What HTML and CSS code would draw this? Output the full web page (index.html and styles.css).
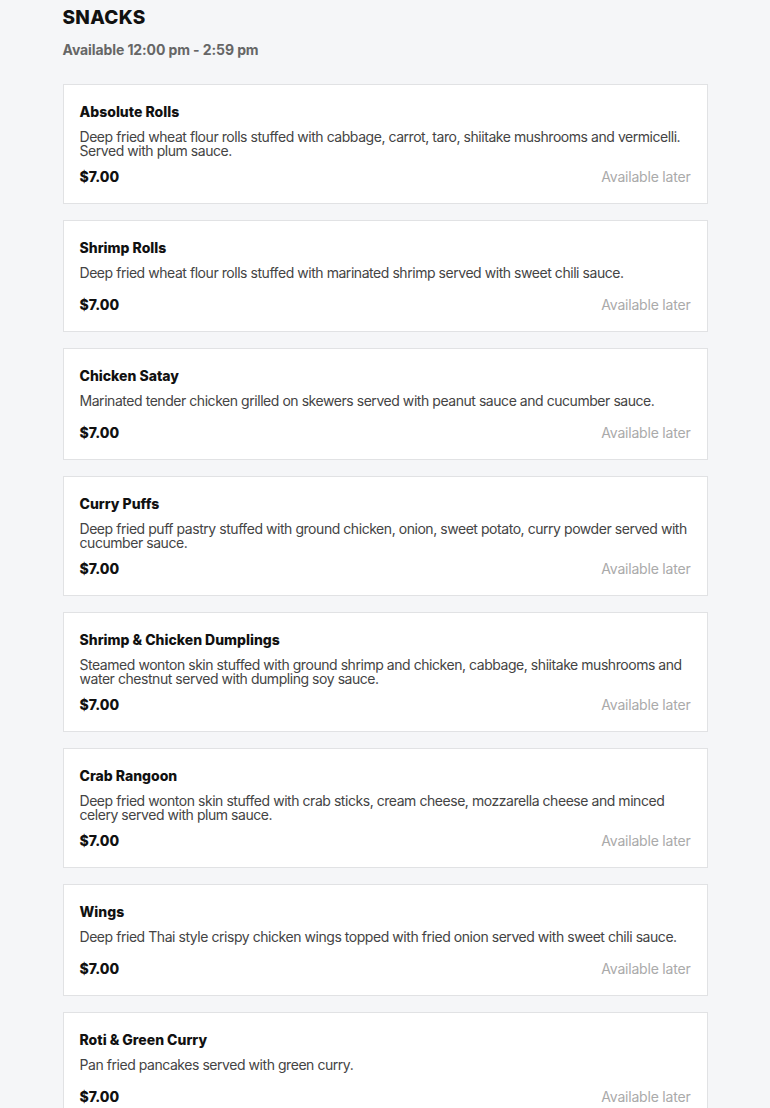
FILE: index.html
```html
<!DOCTYPE html>
<html lang="en">
<head>
<meta charset="utf-8">
<title>Snacks</title>
<link rel="stylesheet" href="styles.css">
</head>
<body>
<main class="menu">
  <header class="section-head">
    <h1 class="section-title">SNACKS</h1>
    <p class="section-hours">Available 12:00 pm - 2:59 pm</p>
  </header>
  <ul class="items">
    <li class="item">
      <h2 class="item-name">Absolute Rolls</h2>
      <p class="item-desc">Deep fried wheat flour rolls stuffed with cabbage, carrot, taro, shiitake mushrooms and vermicelli. Served with plum sauce.</p>
      <div class="item-foot"><span class="item-price">$7.00</span><span class="item-status">Available later</span></div>
    </li>
    <li class="item">
      <h2 class="item-name">Shrimp Rolls</h2>
      <p class="item-desc">Deep fried wheat flour rolls stuffed with marinated shrimp served with sweet chili sauce.</p>
      <div class="item-foot"><span class="item-price">$7.00</span><span class="item-status">Available later</span></div>
    </li>
    <li class="item">
      <h2 class="item-name">Chicken Satay</h2>
      <p class="item-desc">Marinated tender chicken grilled on skewers served with peanut sauce and cucumber sauce.</p>
      <div class="item-foot"><span class="item-price">$7.00</span><span class="item-status">Available later</span></div>
    </li>
    <li class="item">
      <h2 class="item-name">Curry Puffs</h2>
      <p class="item-desc">Deep fried puff pastry stuffed with ground chicken, onion, sweet potato, curry powder served with cucumber sauce.</p>
      <div class="item-foot"><span class="item-price">$7.00</span><span class="item-status">Available later</span></div>
    </li>
    <li class="item">
      <h2 class="item-name">Shrimp &amp; Chicken Dumplings</h2>
      <p class="item-desc">Steamed wonton skin stuffed with ground shrimp and chicken, cabbage, shiitake mushrooms and water chestnut served with dumpling soy sauce.</p>
      <div class="item-foot"><span class="item-price">$7.00</span><span class="item-status">Available later</span></div>
    </li>
    <li class="item">
      <h2 class="item-name">Crab Rangoon</h2>
      <p class="item-desc">Deep fried wonton skin stuffed with crab sticks, cream cheese, mozzarella cheese and minced celery served with plum sauce.</p>
      <div class="item-foot"><span class="item-price">$7.00</span><span class="item-status">Available later</span></div>
    </li>
    <li class="item">
      <h2 class="item-name">Wings</h2>
      <p class="item-desc">Deep fried Thai style crispy chicken wings topped with fried onion served with sweet chili sauce.</p>
      <div class="item-foot"><span class="item-price">$7.00</span><span class="item-status">Available later</span></div>
    </li>
    <li class="item">
      <h2 class="item-name">Roti &amp; Green Curry</h2>
      <p class="item-desc">Pan fried pancakes served with green curry.</p>
      <div class="item-foot"><span class="item-price">$7.00</span><span class="item-status">Available later</span></div>
    </li>
  </ul>
</main>
</body>
</html>
```
FILE: styles.css
```css
html, body {
  margin: 0;
  padding: 0;
  background: #f5f6f8;
}
body {
  font-family: Inter, "Liberation Sans", sans-serif;
  color: #111;
}
.menu {
  width: 645px;
  margin: 0 auto;
  padding-top: 6px;
}
.section-head {
  margin-bottom: 24px;
}
.section-title {
  margin: 0;
  font-size: 19px;
  line-height: 24px;
  font-weight: 800;
  letter-spacing: 0.3px;
  color: #111;
}
.section-hours {
  margin: 10px 0 0;
  font-size: 14px;
  line-height: 20px;
  font-weight: 700;
  color: #666;
  letter-spacing: -0.1px;
}
.items {
  list-style: none;
  margin: 0;
  padding: 0;
  display: flex;
  flex-direction: column;
  gap: 16px;
}
.item {
  background: #fff;
  border: 1px solid #e1e2e4;
  padding: 17px 16px 16px;
}
.item-name {
  margin: 0;
  font-size: 14px;
  line-height: 20px;
  font-weight: 800;
  color: #111;
  letter-spacing: 0;
}
.item-desc {
  margin: 8px 0 0;
  min-height: 20px;
  font-size: 14px;
  line-height: 14px;
  color: #444;
  letter-spacing: -0.45px;
}
.item-foot {
  margin-top: 9px;
  display: flex;
  justify-content: space-between;
  align-items: center;
  font-size: 14px;
  line-height: 20px;
}
.item-price {
  font-weight: 800;
  color: #111;
}
.item-status {
  color: #aaa;
  letter-spacing: -0.2px;
}
```
